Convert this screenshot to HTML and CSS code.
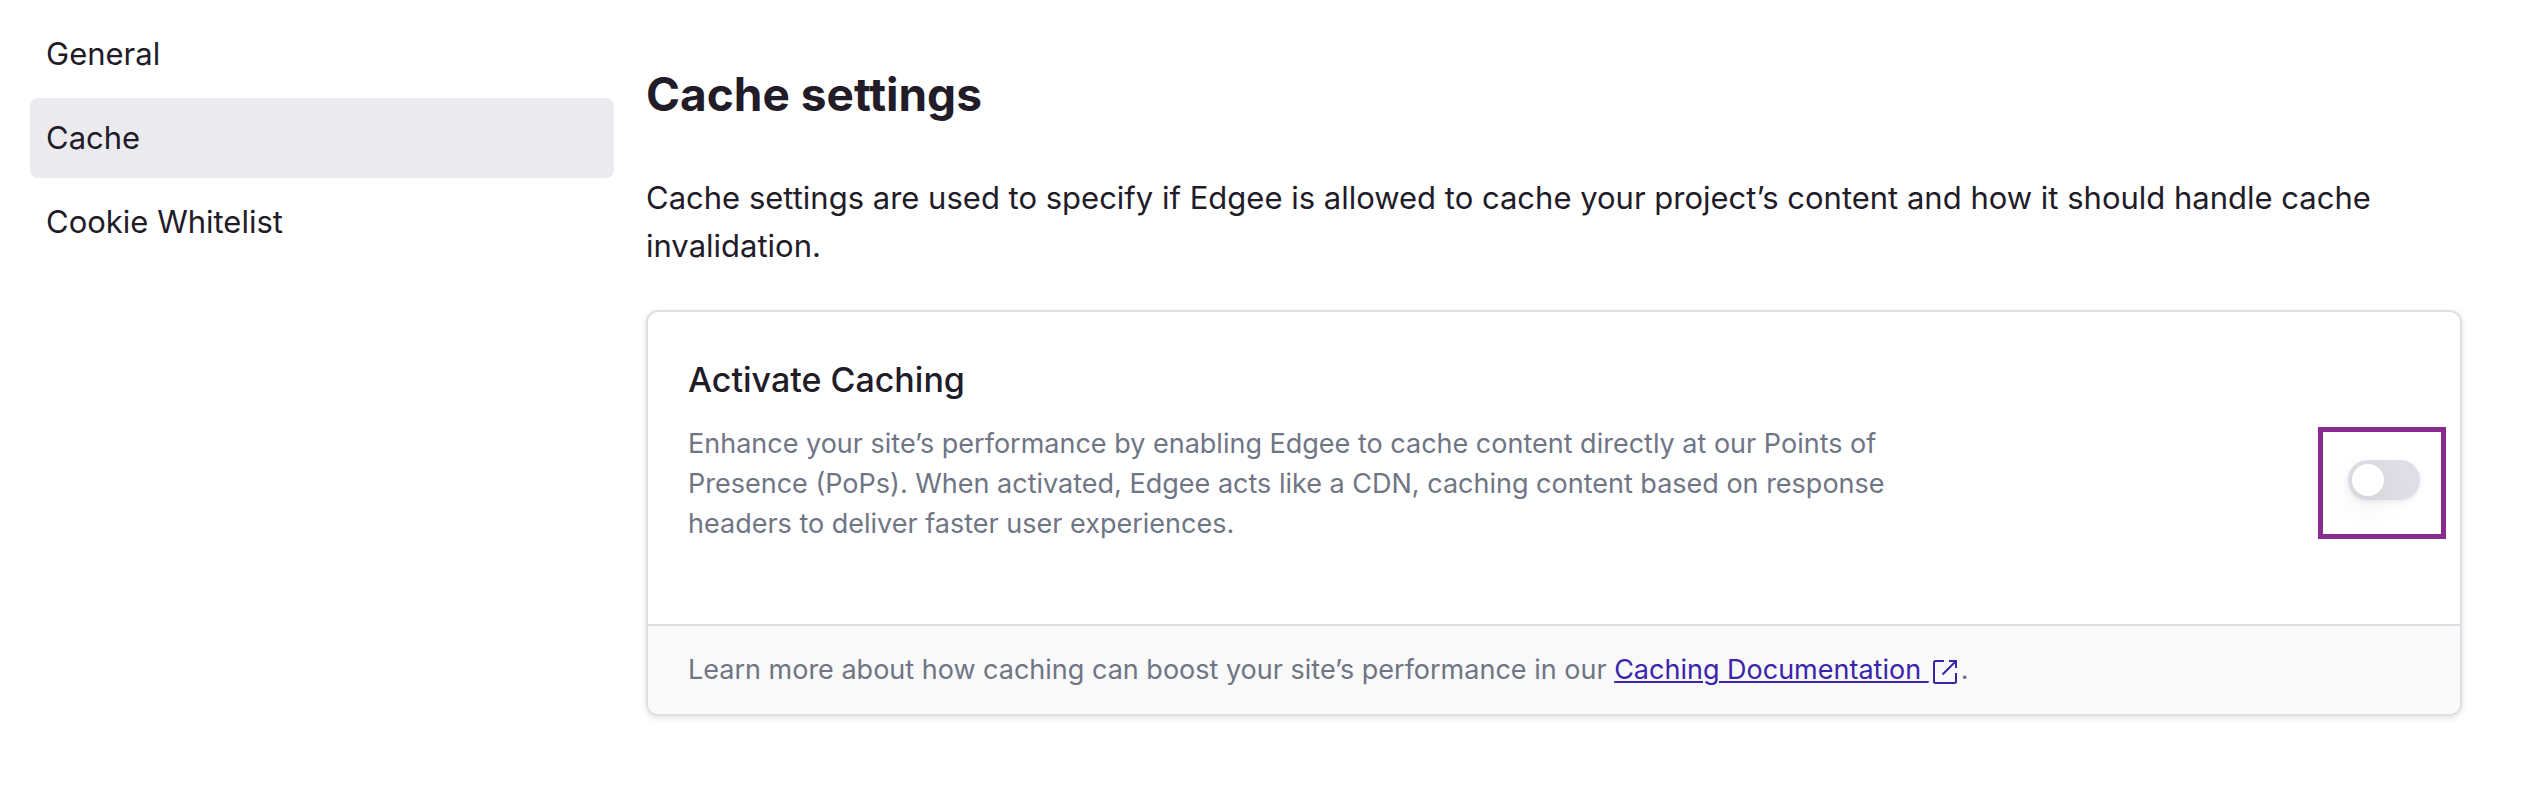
FILE: index.html
```html
<!DOCTYPE html>
<html lang="en">
<head>
<meta charset="utf-8">
<meta name="viewport" content="width=device-width, initial-scale=1">
<title>Cache settings</title>
<link rel="stylesheet" href="styles.css">
</head>
<body>
<div class="layout">
  <nav class="sidebar" aria-label="Settings">
    <a class="sidebar-link" href="#general">General</a>
    <a class="sidebar-link is-active" href="#cache" aria-current="page">Cache</a>
    <a class="sidebar-link" href="#cookies">Cookie Whitelist</a>
  </nav>
  <main class="content">
    <h1 class="page-title">Cache settings</h1>
    <p class="intro">Cache settings are used to specify if Edgee is allowed to cache your project’s content and how it should handle cache invalidation.</p>
    <section class="card">
      <div class="card-body">
        <div class="card-text">
          <h2 class="card-title"><label for="caching">Activate Caching</label></h2>
          <p class="card-description" id="caching-help">Enhance your site’s performance by enabling Edgee to cache content directly at our Points of Presence (PoPs). When activated, Edgee acts like a CDN, caching content based on response headers to deliver faster user experiences.</p>
        </div>
        <div class="switch-wrap">
          <input class="switch" type="checkbox" role="switch" id="caching" aria-describedby="caching-help">
        </div>
      </div>
      <footer class="card-footer">Learn more about how caching can boost your site’s performance in our <a class="doc-link" href="#docs">Caching Documentation <svg class="external-icon" viewBox="0 0 24 24" aria-hidden="true"><path d="M11 1H2.500Q1 1 1 2.500V21.500Q1 23 2.500 23H21.500Q23 23 23 21.500V13M16 1H23V8M23 1L9.500 14.500"/></svg></a>.</footer>
    </section>
  </main>
</div>
</body>
</html>
```
FILE: styles.css
```css
* {
  box-sizing: border-box;
}

body {
  margin: 0;
  background: #fff;
  color: #221b28;
  font-family: Inter, "Liberation Sans", sans-serif;
  font-size: 31px;
  line-height: 48px;
}

h1,
h2,
p {
  margin: 0;
}

.layout {
  display: grid;
  grid-template-columns: repeat(4, 1fr);
  gap: 32px;
  padding: 14px 76px 40px 30px;
}

.sidebar {
  display: flex;
  flex-direction: column;
  gap: 4px;
}

.sidebar-link {
  padding: 16px;
  border-radius: 8px;
  color: inherit;
  text-decoration: none;
}

.sidebar-link.is-active {
  background: #ebebef;
}

.content {
  grid-column: span 3;
  padding-top: 48px;
}

.page-title {
  margin-bottom: 48px;
  font-size: 46px;
  font-weight: 700;
  line-height: 64px;
}

.intro {
  margin-bottom: 40px;
}

.card {
  overflow: hidden;
  border: 2px solid #dfdee4;
  border-radius: 12px;
  box-shadow: 0 2px 6px rgba(0, 0, 0, 0.12);
}

.card-body {
  display: flex;
  align-items: center;
  justify-content: space-between;
  gap: 40px;
  padding: 40px 40px 16px;
}

.card-text {
  max-width: 1240px;
  padding-bottom: 64px;
}

.card-title {
  margin-bottom: 16px;
  font-size: 34px;
  font-weight: 500;
  line-height: 56px;
}

.card-description,
.card-footer {
  color: #6f7585;
  font-size: 27px;
  line-height: 40px;
}

.card-footer {
  padding: 24px 40px;
  border-top: 2px solid #dfdee4;
  background: #f9f9f9;
}

.switch-wrap {
  position: relative;
  display: flex;
  flex: none;
}

/* Highlight frame around the switch */
.switch-wrap::after {
  content: "";
  position: absolute;
  inset: -33px -26px -39px -30px;
  border: 5px solid #882a8e;
  pointer-events: none;
}

.switch {
  width: 72px;
  height: 40px;
  margin: 0;
  padding: 4px;
  appearance: none;
  border-radius: 20px;
  background: #dfdee4;
  box-shadow: 0 2px 6px rgba(0, 0, 0, 0.08);
  cursor: pointer;
}

.switch::before {
  content: "";
  display: block;
  width: 32px;
  height: 32px;
  border-radius: 50%;
  background: #fff;
  box-shadow: 0 12px 32px rgba(0, 0, 0, 0.08);
}

.switch:checked {
  background: #3b24ac;
}

.switch:checked::before {
  margin-left: auto;
}

.doc-link {
  color: #3b24ac;
  text-decoration-thickness: 2px;
  text-underline-offset: 2px;
}

.external-icon {
  width: 24px;
  height: 24px;
  margin: 0 4px;
  vertical-align: -5px;
  fill: none;
  stroke: currentColor;
  stroke-width: 2;
}
```
